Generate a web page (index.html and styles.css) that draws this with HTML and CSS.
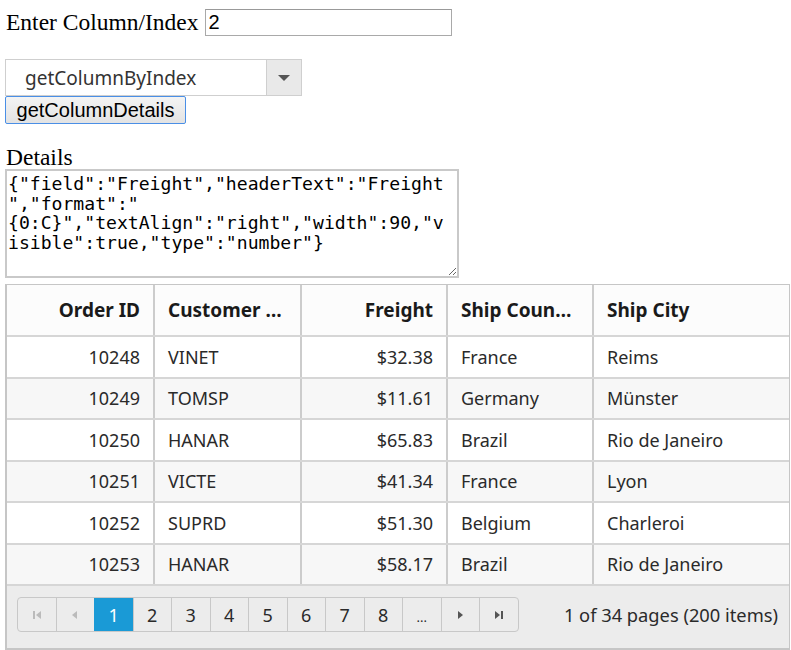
FILE: index.html
```html
<!DOCTYPE html>
<html>
<head>
<meta charset="utf-8">
<link rel="stylesheet" href="styles.css">
</head>
<body>
<div class="row1">
  <label class="lbl" for="idx">Enter Column/Index</label>
  <input id="idx" class="idx-input" type="text" value="2">
</div>
<div class="dropdown">
  <span class="dd-text">getColumnByIndex</span>
  <span class="dd-arrow"><svg width="12" height="6" viewBox="0 0 12 6"><path d="M0 0h12L6 6z" fill="#555"/></svg></span>
</div>
<button class="btn">getColumnDetails</button>
<div class="details-lbl">Details</div>
<textarea class="details" spellcheck="false">{"field":"Freight","headerText":"Freight
","format":"
{0:C}","textAlign":"right","width":90,"v
isible":true,"type":"number"}</textarea>
<div class="grid">
  <table class="gt">
    <colgroup><col class="c1"><col class="c2"><col class="c3"><col class="c4"><col class="c5"></colgroup>
    <thead>
      <tr><th class="r"><span class="ht">Order ID</span></th><th><span class="ht">Customer ID</span></th><th class="r"><span class="ht">Freight</span></th><th><span class="ht">Ship Country</span></th><th><span class="ht">Ship City</span></th></tr>
    </thead>
    <tbody>
      <tr><td class="r">10248</td><td>VINET</td><td class="r">$32.38</td><td>France</td><td>Reims</td></tr>
      <tr class="alt"><td class="r">10249</td><td>TOMSP</td><td class="r">$11.61</td><td>Germany</td><td>Münster</td></tr>
      <tr><td class="r">10250</td><td>HANAR</td><td class="r">$65.83</td><td>Brazil</td><td>Rio de Janeiro</td></tr>
      <tr class="alt"><td class="r">10251</td><td>VICTE</td><td class="r">$41.34</td><td>France</td><td>Lyon</td></tr>
      <tr><td class="r">10252</td><td>SUPRD</td><td class="r">$51.30</td><td>Belgium</td><td>Charleroi</td></tr>
      <tr class="alt"><td class="r">10253</td><td>HANAR</td><td class="r">$58.17</td><td>Brazil</td><td>Rio de Janeiro</td></tr>
    </tbody>
  </table>
  <div class="pager">
    <div class="pages">
      <span class="pg dis"><svg width="10" height="10" viewBox="0 0 10 10"><rect x="1" y="1" width="2" height="8" fill="#bbb"/><path d="M9 1v8L4 5z" fill="#bbb"/></svg></span>
      <span class="pg dis"><svg width="10" height="10" viewBox="0 0 10 10"><path d="M7 1v8L2 5z" fill="#bbb"/></svg></span>
      <span class="pg active">1</span>
      <span class="pg">2</span>
      <span class="pg">3</span>
      <span class="pg">4</span>
      <span class="pg">5</span>
      <span class="pg">6</span>
      <span class="pg">7</span>
      <span class="pg">8</span>
      <span class="pg more">...</span>
      <span class="pg"><svg width="10" height="10" viewBox="0 0 10 10"><path d="M3 1v8L8 5z" fill="#555"/></svg></span>
      <span class="pg"><svg width="10" height="10" viewBox="0 0 10 10"><path d="M1 1v8L6 5z" fill="#555"/><rect x="7" y="1" width="2" height="8" fill="#555"/></svg></span>
    </div>
    <div class="pinfo">1 of 34 pages (200 items)</div>
  </div>
</div>
</body>
</html>
```
FILE: styles.css
```css
html, body { margin: 0; padding: 0; background: #fff; }
body { padding-left: 5px; font-family: "Liberation Serif", serif; color: #000; }

.row1 { display: flex; align-items: center; margin-top: 9px; height: 26px; }
.lbl { font-size: 23.5px; margin-left: 1px; margin-right: 6px; }
.idx-input {
  box-sizing: border-box; width: 247px; height: 27px; margin: 0;
  border: 1px solid #a9a9a9; border-top-color: #999;
  font-family: "Liberation Sans", sans-serif; font-size: 20px; padding: 0 3px; color: #000;
}

.dropdown {
  box-sizing: border-box; margin-top: 24px; width: 297px; height: 37px;
  border: 1px solid #cfcfcf; display: flex; background: #fff;
}
.dd-text { flex: 1; font-family: "Noto Sans", sans-serif; font-size: 19px; color: #333; padding-left: 19px; line-height: 37px; }
.dd-arrow { width: 34px; border-left: 1px solid #cfcfcf; background: #e9e9e9; display: flex; align-items: center; justify-content: center; }

.btn {
  display: block; box-sizing: border-box; margin: 0; width: 181px; height: 28px;
  border: 1px solid #4a8fe6; border-radius: 2px;
  background: linear-gradient(#f4f4f4, #e3e3e3);
  font-family: "Liberation Sans", sans-serif; font-size: 20px; color: #000; padding: 0;
}

.details-lbl { font-size: 23.5px; margin-top: 21px; line-height: 24px; margin-left: 1px; }
.details {
  display: block; box-sizing: border-box; width: 454px; height: 109px; margin: 0;
  border: 2px solid #c9c9c9; padding: 3px 1px;
  font-family: "DejaVu Sans Mono", monospace; font-size: 18.1px; line-height: 19.5px; color: #000;
  white-space: pre; overflow: hidden;
}

.grid { margin-top: 6px; width: 785px; box-sizing: border-box; border: 1px solid #c6c6c6; border-left-width: 2px; border-bottom-width: 2px; font-family: "Noto Sans", sans-serif; }
.gt { border-collapse: collapse; table-layout: fixed; width: 100%; }
.c1 { width: 147px; } .c2 { width: 147px; } .c3 { width: 146px; } .c4 { width: 146px; } .c5 { width: auto; }
.gt th, .gt td { border-left: 2px solid #cccccc; border-bottom: 2px solid #d6d6d6; padding: 0 13px 0 13px; text-align: left; white-space: nowrap; overflow: hidden; text-overflow: ellipsis; }
.gt th:first-child, .gt td:first-child { border-left: none; }
.gt th { height: 50px; font-size: 19px; font-weight: 700; color: #1a1a1a; background: #fcfcfc; }
.ht { display: block; overflow: hidden; text-overflow: ellipsis; white-space: nowrap; }
.gt th:not(.r) { padding-right: 8px; }
.gt th:not(.r) .ht { max-width: 116px; }
.gt td { height: 39.5px; font-size: 18px; color: #2a2a2a; background: #fff; }
.gt tr.alt td { background: #f7f7f7; }
.gt .r { text-align: right; }

.pager { background: #ececec; height: 62px; box-sizing: border-box; display: flex; align-items: flex-start; justify-content: space-between; padding: 11px 11px 0 10px; }
.pages { display: flex; border: 1px solid #c8c8c8; border-radius: 4px; height: 35px; box-sizing: border-box; overflow: hidden; }
.pg { width: 38.5px; box-sizing: border-box; border-left: 1px solid #c8c8c8; display: flex; align-items: center; justify-content: center; font-size: 18px; color: #2a2a2a; }
.pg:first-child { border-left: none; width: 37.5px; }
.pg.active { background: #1a9ad6; color: #fff; border-left-color: #1a9ad6; }
.pg.more { font-size: 13px; padding-top: 4px; }
.pinfo { font-size: 18.3px; color: #2a2a2a; line-height: 35px; }
```
